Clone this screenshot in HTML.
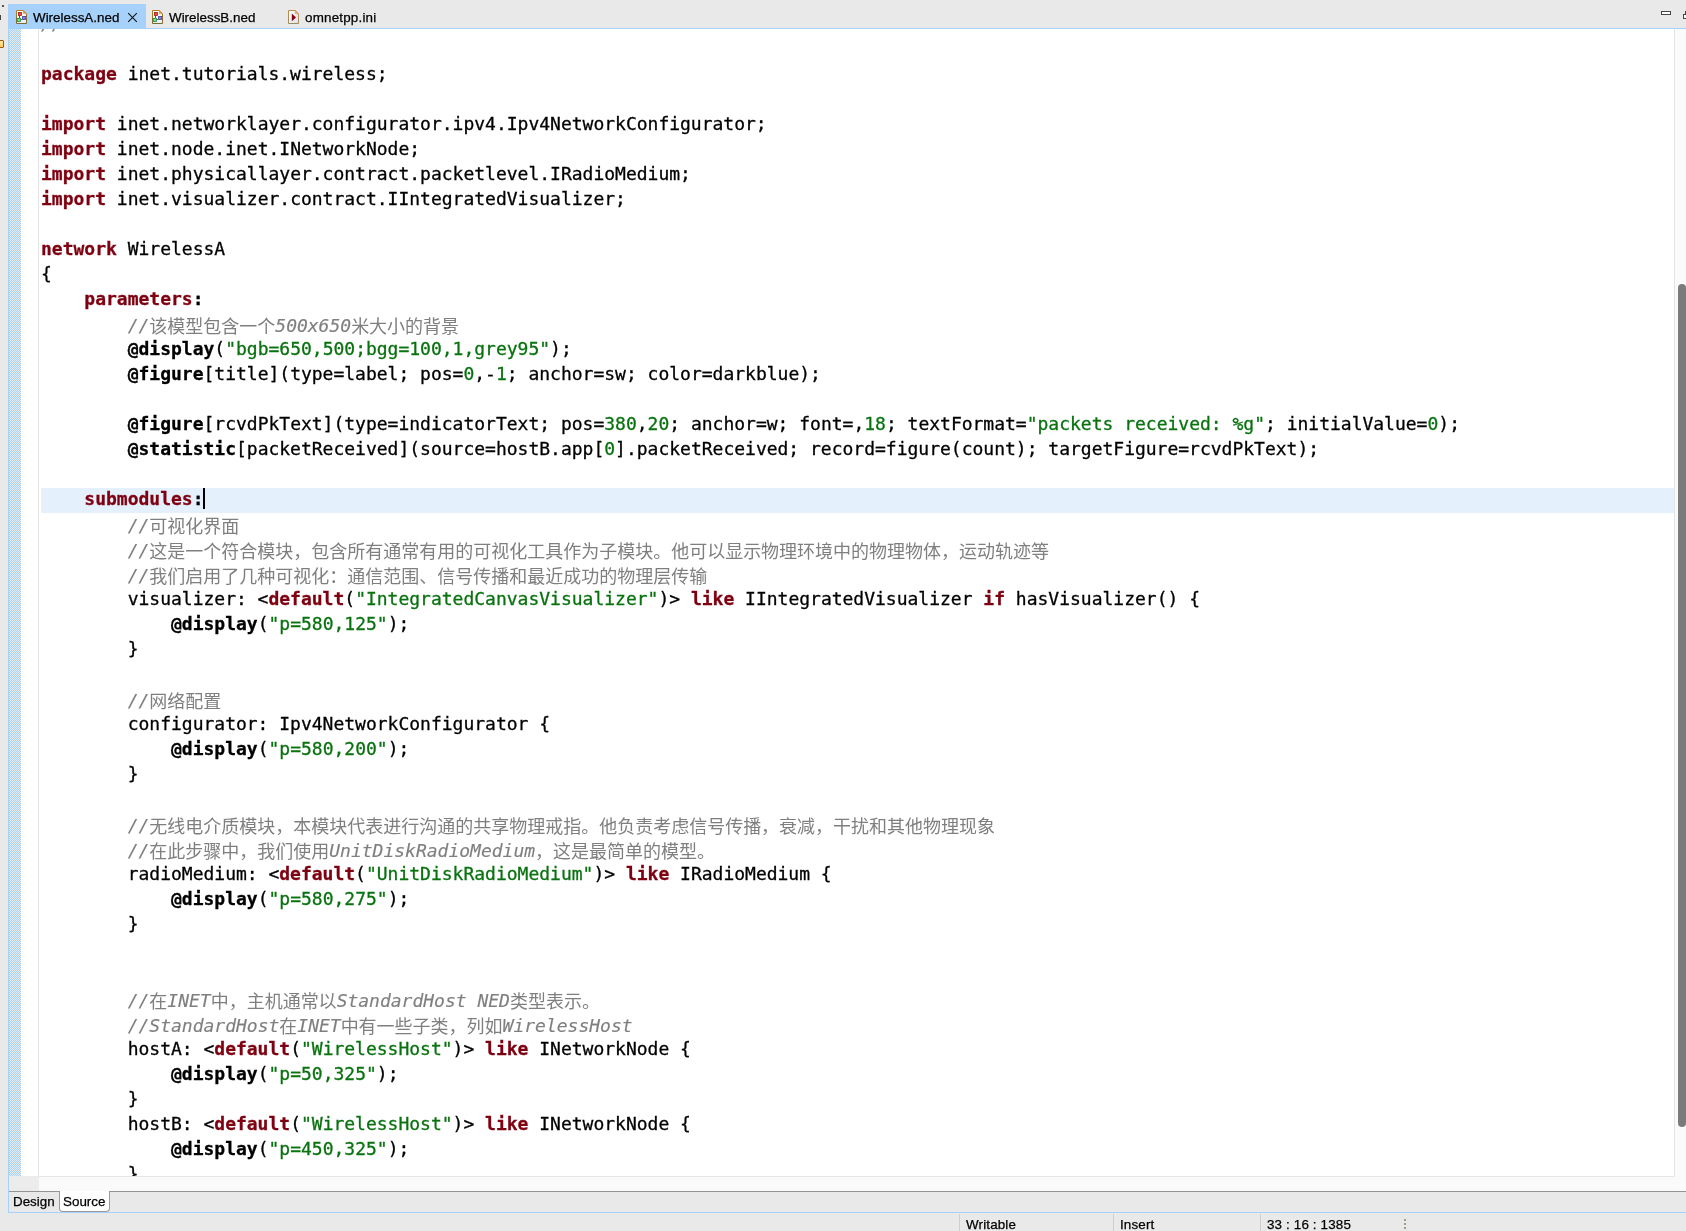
<!DOCTYPE html>
<html lang="zh">
<head>
<meta charset="utf-8">
<title>WirelessA.ned</title>
<style>
html,body{margin:0;padding:0;}
body{width:1686px;height:1231px;overflow:hidden;background:#e9e9e9;position:relative;font-family:"Liberation Sans","Noto Sans CJK SC",sans-serif;font-size:13px;color:#000;}
.abs{position:absolute;}
#tabbar{position:absolute;left:0;top:0;width:1686px;height:28px;}
#tabA{position:absolute;left:8px;top:4px;width:138px;height:25px;background:#a5d1fb;}
.tabtxt{position:absolute;top:10px;line-height:16px;font-size:13.4px;white-space:nowrap;letter-spacing:0;will-change:transform;-webkit-text-stroke:0.25px #000;}
#blueline{position:absolute;left:8px;top:28px;width:1678px;height:1px;background:#a5d1fb;}
#leftborder{position:absolute;left:8px;top:28px;width:1px;height:1185px;background:#a5d1fb;}
#editor{position:absolute;left:9px;top:29px;width:1665px;height:1147px;background:#fff;overflow:hidden;}
#checker{position:absolute;left:0;top:0;width:12px;height:1147px;background-image:repeating-conic-gradient(#a5d1fb 0% 25%,#ececec 0% 50%);background-size:2px 2px;}
#gutline{position:absolute;left:29px;top:0;width:1px;height:1147px;background:#e6e6e6;}
#codelayer{position:absolute;left:0;top:-1px;width:1665px;height:1160px;will-change:transform;}
#hl{position:absolute;left:32px;top:459px;width:1633px;height:25px;background:#e5f0fd;}
.l{position:absolute;left:32px;height:25px;line-height:25px;white-space:pre;font-family:"DejaVu Sans Mono","Liberation Mono","Noto Sans CJK SC",monospace;font-size:18px;color:#000;-webkit-text-stroke:0.3px currentColor;letter-spacing:-0.006px;}
.l.cj{margin-top:1px;}
.k{color:#7f0011;font-weight:bold;}
.p{font-weight:bold;}
.s,.n{color:#08720f;}
.c{color:#7f7f7f;-webkit-text-stroke:0.15px currentColor;}
.c i{font-style:italic;}
.c b.z{font-weight:normal;font-style:normal;font-family:"Noto Sans CJK SC",sans-serif;-webkit-text-stroke:0;position:relative;top:0.5px;}
#caret{position:absolute;left:194px;top:459px;width:2px;height:21px;background:#000;}
#vscroll{position:absolute;left:1674px;top:29px;width:12px;height:1147px;background:#fafafa;border-left:1px solid #e4e4e4;box-sizing:border-box;}
#thumb{position:absolute;left:1678px;top:284px;width:8px;height:843px;border-radius:4px;background:#7b7b7b;}
#hscroll{position:absolute;left:9px;top:1176px;width:1666px;height:15px;background:#fafafa;border-top:1px solid #e6e6e6;box-sizing:border-box;}
#corner{position:absolute;left:1675px;top:1176px;width:11px;height:15px;background:#fafafa;}
#hscrollL{position:absolute;left:9px;top:1176px;width:30px;height:15px;background:#ececec;}
#btabline{position:absolute;left:9px;top:1191px;width:1677px;height:1px;background:#939393;}
#srcTab{position:absolute;left:59px;top:1191px;width:51px;height:21px;background:#fff;border:1px solid #9a9a9a;border-top:none;border-radius:0 0 4px 4px;box-sizing:border-box;}
#blueline2{position:absolute;left:8px;top:1212px;width:1678px;height:1px;background:#a5d1fb;}
.btxt{position:absolute;top:1194px;font-size:13.4px;line-height:16px;white-space:nowrap;will-change:transform;-webkit-text-stroke:0.25px #000;}
.sep{position:absolute;top:1214px;width:1px;height:17px;background:#cfcfcf;}
.stxt{position:absolute;top:1217px;font-size:13.4px;line-height:16px;white-space:nowrap;will-change:transform;letter-spacing:0.15px;-webkit-text-stroke:0.25px #000;}
</style>
</head>
<body>
<div id="tabbar">
  <div id="tabA"></div>
  <!-- left edge artifacts -->
  <div class="abs" style="left:2px;top:5px;width:2px;height:2px;background:#555;"></div>
  <div class="abs" style="left:0;top:15px;width:1px;height:5px;background:#444;"></div>
  <!-- icon A -->
  <svg class="abs" style="left:16px;top:10px" width="11" height="14" viewBox="0 0 11 14">
    <defs><linearGradient id="nb1" x1="0" y1="0" x2="0" y2="1"><stop offset="0" stop-color="#b47d22"/><stop offset="1" stop-color="#7c6a2e"/></linearGradient>
    <linearGradient id="nf1" x1="0" y1="0" x2="0" y2="1"><stop offset="0" stop-color="#ffffff"/><stop offset="0.6" stop-color="#ffffff"/><stop offset="1" stop-color="#dce9fb"/></linearGradient></defs>
    <path d="M0.5 0.5H7.3L10.5 3.7V13.5H0.5Z" fill="url(#nf1)" stroke="url(#nb1)" stroke-width="1"/>
    <path d="M7.3 0.8V3.7H10.2Z" fill="#ddb365" stroke="#b8862e" stroke-width="0.5"/>
    <path d="M3.5 5.5V8.2M4.8 9.4H6.4" stroke="#444" stroke-width="0.9" fill="none"/>
    <rect x="2.4" y="2.4" width="3" height="3" fill="#ff4040" stroke="#962020" stroke-width="0.8"/>
    <rect x="6.6" y="6.4" width="3.1" height="3" fill="#8080ff" stroke="#42428e" stroke-width="0.8"/>
    <rect x="1.2" y="8.3" width="3.3" height="3.2" fill="#6ee884" stroke="#2f7c3e" stroke-width="0.8"/>
  </svg>
  <div class="tabtxt" style="left:33px">WirelessA.ned</div>
  <svg class="abs" style="left:127px;top:12px" width="11" height="11" viewBox="0 0 11 11"><path d="M1.2 1.2L9.8 9.8M9.8 1.2L1.2 9.8" stroke="#111" stroke-width="1.1" fill="none"/></svg>
  <!-- icon B -->
  <svg class="abs" style="left:152px;top:10px" width="11" height="14" viewBox="0 0 11 14">
    <defs><linearGradient id="nb2" x1="0" y1="0" x2="0" y2="1"><stop offset="0" stop-color="#b47d22"/><stop offset="1" stop-color="#7c6a2e"/></linearGradient>
    <linearGradient id="nf2" x1="0" y1="0" x2="0" y2="1"><stop offset="0" stop-color="#ffffff"/><stop offset="0.6" stop-color="#ffffff"/><stop offset="1" stop-color="#dce9fb"/></linearGradient></defs>
    <path d="M0.5 0.5H7.3L10.5 3.7V13.5H0.5Z" fill="url(#nf2)" stroke="url(#nb2)" stroke-width="1"/>
    <path d="M7.3 0.8V3.7H10.2Z" fill="#ddb365" stroke="#b8862e" stroke-width="0.5"/>
    <path d="M3.5 5.5V8.2M4.8 9.4H6.4" stroke="#444" stroke-width="0.9" fill="none"/>
    <rect x="2.4" y="2.4" width="3" height="3" fill="#ff4040" stroke="#962020" stroke-width="0.8"/>
    <rect x="6.6" y="6.4" width="3.1" height="3" fill="#8080ff" stroke="#42428e" stroke-width="0.8"/>
    <rect x="1.2" y="8.3" width="3.3" height="3.2" fill="#6ee884" stroke="#2f7c3e" stroke-width="0.8"/>
  </svg>
  <div class="tabtxt" style="left:169px">WirelessB.ned</div>
  <!-- icon ini -->
  <svg class="abs" style="left:288px;top:10px" width="11" height="14" viewBox="0 0 11 14">
    <defs><linearGradient id="ib" x1="0" y1="0" x2="0" y2="1"><stop offset="0" stop-color="#c0904a"/><stop offset="1" stop-color="#a08a58"/></linearGradient>
    <linearGradient id="if" x1="0" y1="0" x2="1" y2="1"><stop offset="0" stop-color="#ffffff"/><stop offset="1" stop-color="#d8e0ee"/></linearGradient></defs>
    <path d="M0.5 0.5H7.3L10.5 3.7V13.5H0.5Z" fill="url(#if)" stroke="url(#ib)" stroke-width="1"/>
    <path d="M7.3 0.8V3.7H10.2Z" fill="#e3bd74" stroke="#c0904a" stroke-width="0.5"/>
    <path d="M3.8 3.6L8 7.4L3.8 11.2Z" fill="#8a0010"/>
  </svg>
  <div class="tabtxt" style="left:305px;letter-spacing:0.2px">omnetpp.ini</div>
  <!-- min / max -->
  <div class="abs" style="left:1661px;top:11px;width:10px;height:4px;box-sizing:border-box;border:1px solid #444;background:#fff;"></div>
  <div class="abs" style="left:1685px;top:11px;width:6px;height:6px;box-sizing:border-box;border:1px solid #444;border-top-width:2px;background:#fff;"></div>
  <div class="abs" style="left:1683px;top:14px;width:6px;height:5px;box-sizing:border-box;border:1px solid #444;background:#fff;"></div>
</div>
<div id="blueline"></div>
<div id="leftborder"></div>
<!-- left trim orange icon -->
<div class="abs" style="left:-3px;top:40px;width:7px;height:8px;box-sizing:border-box;border:1px solid #a05a18;border-radius:1px;background:linear-gradient(160deg,#fff1b4,#ffc850);"></div>

<div id="editor">
  <div id="checker"></div>
  <div id="gutline"></div>
  <div id="hl"></div>
  <div id="caret"></div>
<div id="codelayer">
<div class="l" style="top:-17px"><span class="c"><i>//</i></span></div>
<div class="l" style="top:33px"><span class="k">package</span> inet.tutorials.wireless;</div>
<div class="l" style="top:83px"><span class="k">import</span> inet.networklayer.configurator.ipv4.Ipv4NetworkConfigurator;</div>
<div class="l" style="top:108px"><span class="k">import</span> inet.node.inet.INetworkNode;</div>
<div class="l" style="top:133px"><span class="k">import</span> inet.physicallayer.contract.packetlevel.IRadioMedium;</div>
<div class="l" style="top:158px"><span class="k">import</span> inet.visualizer.contract.IIntegratedVisualizer;</div>
<div class="l" style="top:208px"><span class="k">network</span> WirelessA</div>
<div class="l" style="top:233px">{</div>
<div class="l" style="top:258px">    <span class="k">parameters</span><span class="p">:</span></div>
<div class="l cj" style="top:283px">        <span class="c"><i>//</i><b class="z">该模型包含一个</b><i>500x650</i><b class="z">米大小的背景</b></span></div>
<div class="l" style="top:308px">        <span class="p">@display</span>(<span class="s">"bgb=650,500;bgg=100,1,grey95"</span>);</div>
<div class="l" style="top:333px">        <span class="p">@figure</span>[title](type=label; pos=<span class="n">0</span>,-<span class="n">1</span>; anchor=sw; color=darkblue);</div>
<div class="l" style="top:383px">        <span class="p">@figure</span>[rcvdPkText](type=indicatorText; pos=<span class="n">380</span>,<span class="n">20</span>; anchor=w; font=,<span class="n">18</span>; textFormat=<span class="s">"packets received: %g"</span>; initialValue=<span class="n">0</span>);</div>
<div class="l" style="top:408px">        <span class="p">@statistic</span>[packetReceived](source=hostB.app[<span class="n">0</span>].packetReceived; record=figure(count); targetFigure=rcvdPkText);</div>
<div class="l" style="top:458px">    <span class="k">submodules</span><span class="p">:</span></div>
<div class="l cj" style="top:483px">        <span class="c"><i>//</i><b class="z">可视化界面</b></span></div>
<div class="l cj" style="top:508px">        <span class="c"><i>//</i><b class="z">这是一个符合模块，包含所有通常有用的可视化工具作为子模块。他可以显示物理环境中的物理物体，运动轨迹等</b></span></div>
<div class="l cj" style="top:533px">        <span class="c"><i>//</i><b class="z">我们启用了几种可视化：通信范围、信号传播和最近成功的物理层传输</b></span></div>
<div class="l" style="top:558px">        visualizer: &lt;<span class="k">default</span>(<span class="s">"IntegratedCanvasVisualizer"</span>)&gt; <span class="k">like</span> IIntegratedVisualizer <span class="k">if</span> hasVisualizer() {</div>
<div class="l" style="top:583px">            <span class="p">@display</span>(<span class="s">"p=580,125"</span>);</div>
<div class="l" style="top:608px">        }</div>
<div class="l cj" style="top:658px">        <span class="c"><i>//</i><b class="z">网络配置</b></span></div>
<div class="l" style="top:683px">        configurator: Ipv4NetworkConfigurator {</div>
<div class="l" style="top:708px">            <span class="p">@display</span>(<span class="s">"p=580,200"</span>);</div>
<div class="l" style="top:733px">        }</div>
<div class="l cj" style="top:783px">        <span class="c"><i>//</i><b class="z">无线电介质模块，本模块代表进行沟通的共享物理戒指。他负责考虑信号传播，衰减，干扰和其他物理现象</b></span></div>
<div class="l cj" style="top:808px">        <span class="c"><i>//</i><b class="z">在此步骤中，我们使用</b><i>UnitDiskRadioMedium</i><b class="z">，这是最简单的模型。</b></span></div>
<div class="l" style="top:833px">        radioMedium: &lt;<span class="k">default</span>(<span class="s">"UnitDiskRadioMedium"</span>)&gt; <span class="k">like</span> IRadioMedium {</div>
<div class="l" style="top:858px">            <span class="p">@display</span>(<span class="s">"p=580,275"</span>);</div>
<div class="l" style="top:883px">        }</div>
<div class="l cj" style="top:958px">        <span class="c"><i>//</i><b class="z">在</b><i>INET</i><b class="z">中，主机通常以</b><i>StandardHost NED</i><b class="z">类型表示。</b></span></div>
<div class="l cj" style="top:983px">        <span class="c"><i>//StandardHost</i><b class="z">在</b><i>INET</i><b class="z">中有一些子类，列如</b><i>WirelessHost</i></span></div>
<div class="l" style="top:1008px">        hostA: &lt;<span class="k">default</span>(<span class="s">"WirelessHost"</span>)&gt; <span class="k">like</span> INetworkNode {</div>
<div class="l" style="top:1033px">            <span class="p">@display</span>(<span class="s">"p=50,325"</span>);</div>
<div class="l" style="top:1058px">        }</div>
<div class="l" style="top:1083px">        hostB: &lt;<span class="k">default</span>(<span class="s">"WirelessHost"</span>)&gt; <span class="k">like</span> INetworkNode {</div>
<div class="l" style="top:1108px">            <span class="p">@display</span>(<span class="s">"p=450,325"</span>);</div>
<div class="l" style="top:1133px">        }</div>
</div>
</div>
<div id="vscroll"></div>
<div id="thumb"></div>
<div id="hscroll"></div>
<div id="corner"></div>
<div id="hscrollL"></div>
<div id="btabline"></div>
<div id="srcTab"></div>
<div class="btxt" style="left:13px">Design</div>
<div class="btxt" style="left:63px">Source</div>
<div id="blueline2"></div>
<div class="sep" style="left:959px"></div>
<div class="sep" style="left:1113px"></div>
<div class="sep" style="left:1260px"></div>
<div class="stxt" style="left:966px">Writable</div>
<div class="stxt" style="left:1120px">Insert</div>
<div class="stxt" style="left:1267px">33 : 16 : 1385</div>
<div class="abs" style="left:1404px;top:1219px;width:2px;height:2px;background:#a69b8b;box-shadow:0 4px 0 #a69b8b,0 8px 0 #a69b8b;"></div>
</body>
</html>
